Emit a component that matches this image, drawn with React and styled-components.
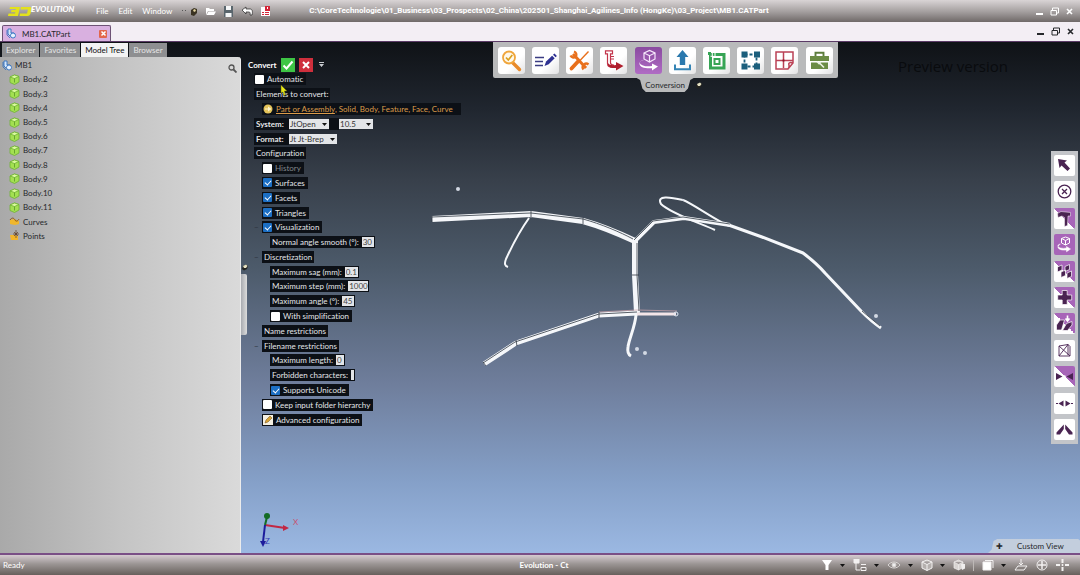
import React, { useState } from "react";
import styled, { createGlobalStyle } from "styled-components";

const bodies = [2, 3, 4, 5, 6, 7, 8, 9, 10, 11];

const tools = [
  { id: "check", label: "Check" },
  { id: "edit", label: "Edit" },
  { id: "repair", label: "Repair" },
  { id: "analyse", label: "Analyse" },
  { id: "convert", label: "Conversion" },
  { id: "export", label: "Export" },
  { id: "offset", label: "Offset" },
  { id: "bounds", label: "Bounds" },
  { id: "drawing", label: "Drawing" },
  { id: "toolbox", label: "Toolbox" },
];

const sideTools = [
  { id: "arrow", label: "Select" },
  { id: "cancel", label: "Cancel" },
  { id: "caliper", label: "Measure", tone: "half" },
  { id: "hand", label: "Convert", tone: "full" },
  { id: "blocks", label: "Split", tone: "half" },
  { id: "plus", label: "Add", tone: "half" },
  { id: "project", label: "Project", tone: "half" },
  { id: "face", label: "Face" },
  { id: "mirror", label: "Mirror", tone: "half" },
  { id: "stretch", label: "Stretch" },
  { id: "angle", label: "Angle" },
];

function ToolIcon({ id }) {
  return (
    <svg width="27" height="27" viewBox="0 0 27 27" fill="none">
      {id === "check" && (
        <>
          <path d="M14.500 15.500l7 7" stroke="#e88a2a" strokeWidth="3.400" strokeLinecap="round" />
          <circle cx="11" cy="10.500" r="6" stroke="#f0a63c" strokeWidth="1.800" fill="#fff8ea" />
          <path d="M8 10.500l2.300 2.500 4-5" stroke="#d9a020" strokeWidth="1.700" />
        </>
      )}
      {id === "edit" && (
        <>
          <path d="M3 10.500h9M3 14.500h8M3 18.500h8" stroke="#3b3d83" strokeWidth="1.600" />
          <path d="M12.500 19l1.600-4.500 6-5.800 2.600 2.600-6 6z" fill="#2e3192" />
          <path d="M21 7.800l1.500-1.300 2.400 2.500-1.300 1.300z" fill="#2e3192" />
        </>
      )}
      {id === "repair" && (
        <>
          <path d="M7 7l13 14" stroke="#e8701c" strokeWidth="3" />
          <path d="M4.500 8.500a3.600 3.600 0 0 0 5 1.500M8 4.500a3.600 3.600 0 0 1 2 5" stroke="#e8701c" strokeWidth="2.300" />
          <path d="M17.500 18a3.500 3.500 0 0 0 0 4.500M18 17.500a3.500 3.500 0 0 1 4.500 0" stroke="#e8701c" strokeWidth="2.300" />
          <path d="M22.500 4.500l-9 9.500" stroke="#e8701c" strokeWidth="1.400" />
          <path d="M12 14.500l-6.500 7" stroke="#e8701c" strokeWidth="3.800" strokeLinecap="round" />
        </>
      )}
      {id === "analyse" && (
        <>
          <path d="M5.500 3.800h7v3h-2v9c0 1.500 1 2.200 3 2.200v2.500c-4 0-6-1.200-6-4V6.800h-2z" stroke="#c2344a" strokeWidth="1.200" fill="#fff" />
          <path d="M11 9.500h3M11 12h3" stroke="#c2344a" />
          <path d="M8 16c1 2 4 2.500 8 2v-3l7.500 4-7.500 4.500v-2.500c-5 .5-9-1-8-5z" fill="#b01f2e" />
        </>
      )}
      {id === "convert" && (
        <>
          <path d="M9 6l5.500-2.500L20 6v6l-5.500 3L9 12zM9 6l5.500 2.700L20 6M14.500 8.700V15" stroke="#f6e8fb" strokeWidth="1.200" />
          <path d="M9 13c-5 1-5.500 4-1 5.500 3 1 5 1 9 .5v-2.500l6 3-6 4v-2.300c-6 .6-13-.9-12.500-5C4.700 14.500 6.500 13 9 13z" fill="#fff" />
        </>
      )}
      {id === "export" && (
        <>
          <path d="M13.500 3l6 7h-3.300v8h-5.400v-8H7.500z" fill="#2a78ad" />
          <path d="M6 17.500v4.800h15v-4.800" stroke="#3484b5" strokeWidth="2" />
        </>
      )}
      {id === "offset" && (
        <>
          <path d="M7.500 7.500h13.500v13.500H7.500z" stroke="#36a455" strokeWidth="3" />
          <path d="M11.500 12h5v5h-5z" stroke="#36a455" strokeWidth="2" />
          <path d="M5 5h3v3H5z" fill="#36a455" />
          <path d="M7.500 9.300h3M9.300 6v4M12 6v3" stroke="#fff" />
        </>
      )}
      {id === "bounds" && (
        <>
          <path d="M7.500 7.500h12v12h-12z" stroke="#1b5e7c" strokeWidth="1.800" strokeDasharray="3 2" />
          <path d="M4.500 4.500h6v6h-6zM17 4.500h6v6h-6zM4.500 16.500h6v6h-6zM17 16.500h6v6h-6z" fill="#1b5e7c" />
        </>
      )}
      {id === "drawing" && (
        <>
          <path d="M5 5h17v11l-5 6H5zM22 16c-3-1-5 0-4 2 .4 1.500-.2 3-1 4M12.500 5v16M5 13.500h17" stroke="#bb4256" strokeWidth="1.500" />
          <path d="M11.500 13.500h2M12.500 12.500v2" stroke="#8b1528" strokeWidth="1.500" />
        </>
      )}
      {id === "toolbox" && (
        <>
          <path d="M9.500 9V5.700h8V9" stroke="#5d7d3c" strokeWidth="1.900" />
          <path d="M4 9h19v5H4zM5 15.500h17V22H5z" fill="#6b8c45" />
          <path d="M11 14.500l2 2 1.500-2M14 16.500l4 4" stroke="#eef3e8" strokeWidth="1.600" />
        </>
      )}
    </svg>
  );
}

function SideIcon({ id }) {
  return (
    <svg width="21" height="21" viewBox="0 0 21 21" fill="none" stroke="#4a2452">
      {id === "arrow" && <path d="M4 4l9 1.500-2.500 2 5.500 6-2.500 2.500-6-5.500-2 2.500z" fill="#4a2452" stroke="none" />}
      {id === "cancel" && (
        <>
          <circle cx="10.500" cy="10.500" r="6.300" strokeWidth="1.300" />
          <path d="M8 8l5 5M13 8l-5 5" strokeWidth="1.300" />
        </>
      )}
      {id === "caliper" && <path d="M3.500 5.500L7 3.500l9.500 1v3.500h-2.500l-.5 9.500-3 1V9.500L8 8l-4 1.500z" fill="#4a2452" stroke="#fff" strokeWidth="0.500" />}
      {id === "hand" && (
        <g stroke="#fff">
          <path d="M7.500 4.500l4-1.500 4 1.500v4.500l-4 2-4-2zM7.500 4.500l4 2 4-2M11.500 6.500V11" />
          <path d="M6.500 10c-3.500.5-3.500 3 0 4 2 .5 4 .5 6 0v-1.500l4 2.500-4 2.800V16c-4 .5-9-.5-8.500-3.500" fill="#fff" strokeWidth="0.500" />
        </g>
      )}
      {id === "blocks" && (
        <g fill="#4a2452" stroke="#fff" strokeWidth="0.700">
          <path d="M3.500 6l4.500-2v5l-4.500 2zM11 5.500l4.500-2v5l-4.500 2zM7 11l4.500-2v5.500L7 16.500zM13 12l4.500-2v5.500L13 17.500z" />
        </g>
      )}
      {id === "plus" && <path d="M8.200 3.500h5v4.500h4.500v5h-4.500v4.500h-5V13H3.700V8h4.500z" fill="#4a2452" stroke="#fff" strokeWidth="0.700" />}
      {id === "project" && (
        <>
          <path d="M13.500 2.500v5M11.500 5.500l2 2.500 2-2.500" stroke="#fff" strokeWidth="1.600" />
          <path d="M2.500 12l3.500-5h4.500l-3 10H2.500zM8.500 17.500l4-7 5.500-2v3.500l-4.500 5.500z" fill="#4a2452" stroke="#fff" strokeWidth="0.700" />
        </>
      )}
      {id === "face" && <path d="M5 6l9-1.500 2 2V16H5zM5 6l11 10M14 4.500L5 16M14 4.500V15" strokeWidth="0.900" />}
      {id === "mirror" && (
        <g fill="#4a2452" stroke="none">
          <path d="M2 7l6.500 3.500L2 14zM19 7l-6.500 3.500L19 14z" />
          <circle cx="10.500" cy="10.500" r="1.200" fill="#fff" />
        </g>
      )}
      {id === "stretch" && (
        <g fill="#4a2452" stroke="none">
          <path d="M9.500 7.500v6l-5-3zM11.500 7.500v6l5-3z" />
          <path d="M2 10h2v1H2zM17 10h2v1h-2z" />
        </g>
      )}
      {id === "angle" && <path d="M9.800 5.500v4.500L6 15.500H2.500v-2zM11.200 5.500v4.500l3.800 5.500h3.500v-2z" fill="#4a2452" stroke="none" />}
    </svg>
  );
}

function PartIcon() {
  return (
    <svg width="11" height="11" viewBox="0 0 11 11" fill="none" stroke="#2f6fc0" strokeWidth="0.900">
      <path d="M2 1h3v4h3v3H4L2 6z" fill="#d4e6fa" />
      <circle cx="7" cy="7.500" r="2.500" fill="#e8f3ff" />
      <path d="M1 2v5l3 3" strokeWidth="0.800" />
    </svg>
  );
}

function BodyIcon() {
  return (
    <svg width="11" height="11" viewBox="0 0 11 11" stroke="#6fb234" strokeWidth="0.800">
      <path d="M1 3l4.500-2L10 2.500v5.500L5.500 10.500 1 8.500z" fill="#a3e052" />
      <path d="M1 3l4.500 1.500L10 2.500 5.500 1z" fill="#dcfa9f" />
      <path d="M5.500 4.500v4" fill="none" stroke="#5b9428" />
    </svg>
  );
}

function Triangle({ color = "#111" }) {
  return (
    <svg width="5" height="5" viewBox="0 0 5 5">
      <path d="M0 1h5L2.500 4z" fill={color} />
    </svg>
  );
}

function PinGlyph() {
  return (
    <svg width="6" height="7" viewBox="0 0 6 7">
      <path d="M1 2l3-1.500L6 2 5 5 2 6.500 0 5z" fill="#23231f" />
      <path d="M1 2l3-1.500L5.500 2 4 4 2 4z" fill="#e6e2c4" />
    </svg>
  );
}

function WindowButtons() {
  return (
    <WinButtons>
      <IconButton aria-label="Minimize">
        <svg width="9" height="9" viewBox="0 0 9 9"><path d="M1 6h7v2H1z" fill="currentColor" /></svg>
      </IconButton>
      <IconButton aria-label="Restore">
        <svg width="9" height="9" viewBox="0 0 9 9" fill="none" stroke="currentColor"><path d="M2.500 3V1h6v5H7M1 3.500h5.500V8H1z" /></svg>
      </IconButton>
      <IconButton aria-label="Close">
        <svg width="9" height="9" viewBox="0 0 9 9" stroke="currentColor" strokeWidth="1.600"><path d="M2 2l5 5M7 2L2 7" /></svg>
      </IconButton>
    </WinButtons>
  );
}

function Option({ label, checked, indent, disabled, glyph }) {
  const [on, setOn] = useState(!!checked);
  return (
    <Row $indent={indent}>
      {glyph && <Twist>−</Twist>}
      <CheckChip $disabled={disabled}>
        <CheckBox type="checkbox" checked={on} disabled={disabled} onChange={(e) => setOn(e.target.checked)} />
        {label}
      </CheckChip>
    </Row>
  );
}

function Field({ label, value, width }) {
  const [text, setText] = useState(value);
  return (
    <Row $indent={22}>
      <FieldChip>
        {label}
        <Value $width={width} value={text} onChange={(e) => setText(e.target.value)} />
      </FieldChip>
    </Row>
  );
}

function Dropdown({ label, options, width }) {
  return (
    <SelectWrap $width={width}>
      <Select aria-label={label}>
        {options.map((o) => (
          <option key={o}>{o}</option>
        ))}
      </Select>
      <Triangle />
    </SelectWrap>
  );
}

function Scene() {
  return (
    <SceneSvg viewBox="241 42 839 511" fill="none">
      <g strokeLinejoin="round">
        <g stroke="#f5f7fa">
          <path d="M432 219l99-5 52 7c18 5 37 13 52 20" strokeWidth="6" />
          <path d="M635 241v34l2 38" strokeWidth="6" />
          <path d="M635 241l19-19 30-4 46 7" strokeWidth="4" />
          <path d="M715 230c-18-8-45-17-54-26-5-9 9-7 22-4 8 3 25 15 40 23" strokeWidth="2" />
          <path d="M723 223l39 14 41 16c8 6 16 13 22 20l36 38c7 7 14 13 20 17" strokeWidth="3" />
          <path d="M484 364l32-21 83-28 38-2" strokeWidth="5" />
          <path d="M637 314h39" strokeWidth="3" stroke="#f3e5e8" />
          <path d="M599 312l38-2 40 1" stroke="#d3a8ae" strokeWidth="0.700" />
          <path d="M529 218c-10 14-17 28-23 41-2 5-1 7 2 8" strokeWidth="2" />
          <path d="M636 315c-1 12-7 24-8 32-1 6 1 8 3 9" strokeWidth="3" />
        </g>
        <g stroke="#303843" strokeWidth="0.800">
          <path d="M432 217l99-4 52 6c18 5 37 13 50 20" />
          <path d="M637 243v32l2 36" />
          <path d="M634 240l19-19 30-4 47 7" />
          <path d="M483 363l32-21 84-28 38-2" />
          <path d="M862 311l18 15" />
        </g>
        <path d="M531 211v6M583 218v6M632 275h7M599 312v6M516 340l1 6M432 216v6M483 362l3 4" stroke="#303843" strokeWidth="0.800" />
        <circle cx="676" cy="314" r="2" stroke="#dfe7f2" />
      </g>
      <g fill="#d3d9e3">
        <circle cx="458" cy="189" r="2" />
        <circle cx="637" cy="349" r="2" />
        <circle cx="645" cy="353" r="2" />
        <circle cx="876" cy="316" r="2" />
        <circle cx="683" cy="200" r="1" />
      </g>
      <path d="M265 525l20 3" stroke="#c22743" strokeWidth="2" />
      <path d="M283 525l6 3-6 3z" fill="#c22743" />
      <path d="M265 525l2-8" stroke="#136b25" strokeWidth="2" />
      <circle cx="267" cy="516" r="3" fill="#136b25" />
      <path d="M265 525l-2 17" stroke="#1c1c9c" strokeWidth="2" />
      <path d="M260 541h6l-3 6z" fill="#1c1c9c" />
      <AxisText x="293" y="525" fill="#c8506e">X</AxisText>
      <AxisText x="265" y="544" fill="#3340b5">Z</AxisText>
    </SceneSvg>
  );
}

export default function App() {
  const [tool, setTool] = useState("convert");
  return (
    <>
      <Global />
      <Window>
        <TitleBar>
          <Logo>
            <svg width="72" height="12" viewBox="0 0 72 12" aria-hidden="true">
              <path d="M2 2h10l-2 9H0l.5-2.500h6.500l.3-1.200H3L3.500 5h4.200l.3-1H1.500zM13 2h9c2 0 2 1 1.500 3l-1 3.500c-.5 1.500-1 2.500-3 2.500h-8l.5-2.500h7l1-4h-7.500z" fill="#e3e11c" />
            </svg>
            <LogoText>EVOLUTION</LogoText>
          </Logo>
          <Menus>
            <Menu>File</Menu>
            <Menu>Edit</Menu>
            <Menu>Window</Menu>
          </Menus>
          <Quick>
            <IconButton aria-label="Pin">
              <svg width="16" height="11" viewBox="0 0 16 11"><path d="M0 4h1v1H0zM3 4h1v1H3z" fill="#555" /><path d="M9 4l3-2 3 1v4l-3 3-3-1z" fill="#3a3322" /><path d="M11 4l2-1 1 2-2 1z" fill="#e8d9a5" /></svg>
            </IconButton>
            <IconButton aria-label="Open">
              <svg width="11" height="11" viewBox="0 0 11 11"><path d="M1 2h3l1 1h4v2H3L1 9zM3.500 5.500H11L9 9H1.500z" fill="#fff" /></svg>
            </IconButton>
            <IconButton aria-label="Save">
              <svg width="11" height="11" viewBox="0 0 11 11"><path d="M1 0h9v11H1z" fill="#59656c" /><path d="M3 0h5v4H3zM2.500 7h6v4h-6z" fill="#f4f6f7" /></svg>
            </IconButton>
            <IconButton aria-label="Undo">
              <svg width="12" height="11" viewBox="0 0 12 11"><path d="M1 4l4-3v2h4c2 0 3 2 2 6H9c.5-2 0-3-1-3H5v2z" fill="#fff" stroke="#222" strokeWidth="0.700" /></svg>
            </IconButton>
            <IconButton aria-label="Report">
              <svg width="11" height="11" viewBox="0 0 11 11"><path d="M1 1h9v9H1z" fill="#fff" /><path d="M5 0h5v5H5zM2 6h2v1H2zM5 6h4v1H5zM2 8h2v1H2zM5 8h4v1H5z" fill="#d32537" /><path d="M7 1h1v2H7z" fill="#fff" /></svg>
            </IconButton>
          </Quick>
          <FilePath>C:\CoreTechnologie\01_Business\03_Prospects\02_China\202501_Shanghai_Agilines_Info (HongKe)\03_Project\MB1.CATPart</FilePath>
          <WindowButtons />
        </TitleBar>

        <FileBar>
          <FileTab>
            <PartIcon />
            <span>MB1.CATPart</span>
            <CloseTab aria-label="Close file">
              <svg width="7" height="7" viewBox="0 0 7 7" stroke="#fff" strokeWidth="1.500"><path d="M1.500 1.500l4 4M5.500 1.500l-4 4" /></svg>
            </CloseTab>
          </FileTab>
          <WindowButtons />
        </FileBar>

        <Workspace>
          <Sidebar>
            <Tabs>
              <Tab>Explorer</Tab>
              <Tab>Favorites</Tab>
              <Tab $active>Model Tree</Tab>
              <Tab>Browser</Tab>
            </Tabs>
            <Tree>
              <TreeRows>
                <TreeRow $root>
                  <PartIcon />
                  MB1
                </TreeRow>
                {bodies.map((n) => (
                  <TreeRow key={n}>
                    <BodyIcon />
                    Body.{n}
                  </TreeRow>
                ))}
                <TreeRow>
                  <svg width="11" height="11" viewBox="0 0 11 11"><path d="M1 4l4-1 5 2v3L6 9 1 8z" fill="#f0b72d" /><path d="M1 4c2-3 4-2 5 0s3 1 4-1" fill="none" stroke="#8b5519" /></svg>
                  Curves
                </TreeRow>
                <TreeRow>
                  <svg width="11" height="11" viewBox="0 0 11 11"><path d="M1 5h4l4 1v4H2z" fill="#f3b52a" /><path d="M7 0v8M4 4h6M5 2l4 4M9 2L5 6" stroke="#5d3c22" strokeWidth="0.700" /></svg>
                  Points
                </TreeRow>
              </TreeRows>
              <IconButton aria-label="Search tree">
                <svg width="9" height="9" viewBox="0 0 9 9" fill="none" stroke="#555"><circle cx="3.500" cy="3.500" r="2.500" strokeWidth="1.300" /><path d="M5.500 5.500L8.500 8.500" strokeWidth="1.800" /></svg>
              </IconButton>
            </Tree>
          </Sidebar>

          <Viewport>
            <Scene />
            <Splitter />
            <PanelPin><PinGlyph /></PanelPin>
            <Panel>
              <Heading>
                Convert
                <Apply aria-label="Apply">
                  <svg width="14" height="14" viewBox="0 0 14 14" fill="none" stroke="#fff" strokeWidth="2"><path d="M2.500 7.500l3 3 6-7" /></svg>
                </Apply>
                <Apply $danger aria-label="Cancel">
                  <svg width="14" height="14" viewBox="0 0 14 14" fill="none" stroke="#fff" strokeWidth="2"><path d="M4 4l6 6M10 4l-6 6" /></svg>
                </Apply>
                <svg width="7" height="7" viewBox="0 0 7 7"><path d="M2 1h5v1H2zM2 3h5L4.500 6z" fill="#c9ccd0" /></svg>
              </Heading>
              <Rows>
                <Option label="Automatic" indent={6} />
                <Row $indent={6}><Chip>Elements to convert:</Chip></Row>
                <Row $indent={14}>
                  <Picker>
                    <svg width="10" height="10" viewBox="0 0 10 10"><circle cx="5" cy="5" r="4.500" fill="#e4c35a" /><path d="M2 4.500h3V2.500L8.500 5 5 7.500v-2H2z" fill="#fff6cf" /></svg>
                    <span><a href="#part">Part or Assembly</a>, Solid, Body, Feature, Face, Curve</span>
                  </Picker>
                </Row>
                <Row $indent={6}>
                  <StrongChip>System:</StrongChip>
                  <Dropdown label="System" options={["JtOpen"]} width={40} />
                  <Gap />
                  <Dropdown label="Version" options={["10.5"]} width={34} />
                </Row>
                <Row $indent={6}>
                  <StrongChip>Format:</StrongChip>
                  <Dropdown label="Format" options={["Jt Jt-Brep"]} width={48} />
                </Row>
                <Row $indent={6}><Chip>Configuration</Chip></Row>
                <Option label="History" indent={14} disabled />
                <Option label="Surfaces" indent={14} checked />
                <Option label="Facets" indent={14} checked />
                <Option label="Triangles" indent={14} checked />
                <Option label="Visualization" indent={14} checked glyph />
                <Field label="Normal angle smooth (°):" value="30" width={12} />
                <Row $indent={14}><Twist>−</Twist><Chip>Discretization</Chip></Row>
                <Field label="Maximum sag (mm):" value="0.1" width={13} />
                <Field label="Maximum step (mm):" value="1000" width={20} />
                <Field label="Maximum angle (°):" value="45" width={12} />
                <Option label="With simplification" indent={22} />
                <Row $indent={14}><Chip>Name restrictions</Chip></Row>
                <Row $indent={14}><Twist>−</Twist><Chip>Filename restrictions</Chip></Row>
                <Field label="Maximum length:" value="0" width={8} />
                <Field label="Forbidden characters:" value="" width={3} />
                <Option label="Supports Unicode" indent={22} checked />
                <Option label="Keep input folder hierarchy" indent={14} />
                <Row $indent={14}>
                  <AdvancedButton>
                    <svg width="10" height="10" viewBox="0 0 10 10"><path d="M0 0h10v10H0z" fill="#f4efe2" /><path d="M2 8l1-3 4-4 2 2-4 4z" fill="#d9a436" stroke="#6b4a18" strokeWidth="0.500" /></svg>
                    Advanced configuration
                  </AdvancedButton>
                </Row>
              </Rows>
            </Panel>
            <Cursor width="8" height="11" viewBox="0 0 8 11"><path d="M1 0l6 6H4.500L5.500 10 4 10.500 2.800 7 1 8z" fill="#e6e61a" stroke="#555a12" strokeWidth="0.500" /></Cursor>

            <Ribbon>
              <RibbonButtons>
                {tools.map((t) => (
                  <RibbonButton key={t.id} aria-label={t.label} $active={t.id === tool} onClick={() => setTool(t.id)}>
                    <ToolIcon id={t.id} />
                  </RibbonButton>
                ))}
              </RibbonButtons>
              <RibbonFoot>
                <RibbonLabel>{tools.find((t) => t.id === tool).label}</RibbonLabel>
                <PinGlyph />
              </RibbonFoot>
            </Ribbon>
            <Watermark>Preview version</Watermark>

            <SideBar>
              {sideTools.map((t) => (
                <SideButton key={t.id} aria-label={t.label} $tone={t.tone}>
                  <SideIcon id={t.id} />
                </SideButton>
              ))}
            </SideBar>

            <ViewTab>
              <span>✚</span>
              Custom View
            </ViewTab>
          </Viewport>
        </Workspace>

        <StatusBar>
          <span>Ready</span>
          <strong>Evolution - Ct</strong>
          <StatusTools>
            <IconButton aria-label="Filter">
              <svg width="12" height="12" viewBox="0 0 12 12"><path d="M1 1h10L7.500 6v5h-3V6z" fill="#fff" /></svg>
              <Triangle />
            </IconButton>
            <IconButton aria-label="Structure">
              <svg width="14" height="12" viewBox="0 0 14 12" fill="none" stroke="#f3f1f1"><path d="M1 0h5v4H1z" fill="#f3f1f1" /><path d="M3 4v7h4M8 5.500h5M8 8.500h5v3H8z" /></svg>
              <Triangle />
            </IconButton>
            <IconButton aria-label="Visibility">
              <svg width="14" height="12" viewBox="0 0 14 12" fill="none" stroke="#d8d4d3"><path d="M1 6c3-4 9-4 12 0-3 4-9 4-12 0z" /><circle cx="7" cy="6" r="2" fill="#eee" /></svg>
              <Triangle />
            </IconButton>
            <IconButton aria-label="Orientation">
              <svg width="12" height="12" viewBox="0 0 12 12" fill="#b5b0ae" stroke="#f3f1f1"><path d="M1 3l5-2 5 2v6l-5 2.500L1 9zM1 3l5 2.500L11 3M6 5.500v6" /></svg>
              <Triangle />
            </IconButton>
            <IconButton aria-label="Shading">
              <svg width="12" height="12" viewBox="0 0 12 12" fill="#d8d4d2" stroke="#efeded"><path d="M1 3l4.500-2L10 3v5.500L5.500 11 1 9zM1 3l4.500 2.500L10 3M5.500 5.500V11" strokeWidth="0.700" /><path d="M8 5h4v4.500L9 11z" fill="#efeded" stroke="none" /></svg>
            </IconButton>
            <Divider />
            <IconButton aria-label="Background">
              <svg width="12" height="12" viewBox="0 0 12 12" fill="none" stroke="#f3f1f1"><path d="M1 3h8v8H1z" fill="#fff" /><path d="M3 1.500h8V9" /></svg>
              <Triangle />
            </IconButton>
            <IconButton aria-label="Plane">
              <svg width="14" height="12" viewBox="0 0 14 12" fill="none" stroke="#f3f1f1"><path d="M4 7h9l-3 4H1zM7 0v6M5 4l2 2 2-2" /></svg>
            </IconButton>
            <IconButton aria-label="Center">
              <svg width="12" height="12" viewBox="0 0 12 12" fill="none" stroke="#f3f1f1"><circle cx="6" cy="6" r="5" /><path d="M6 2v8M2 6h8" strokeWidth="1.500" /></svg>
            </IconButton>
            <IconButton aria-label="Fit">
              <svg width="13" height="12" viewBox="0 0 13 12" fill="none" stroke="#f3f1f1" strokeWidth="2"><path d="M6.500 0v4M6.500 8v4M0 6h4M9 6h4" /><path d="M6 5.500h1v1H6z" strokeWidth="1" /></svg>
            </IconButton>
          </StatusTools>
        </StatusBar>
      </Window>
    </>
  );
}

const Global = createGlobalStyle`
  * { box-sizing: border-box; }
  body {
    margin: 0;
    font-family: Lato, "Open Sans", sans-serif;
    font-size: 8px;
    font-variant-ligatures: none;
    line-height: 12px;
    color: #26282b;
  }
  button, input, select { font: inherit; color: inherit; border: 0; margin: 0; padding: 0; }
  svg { display: block; flex-shrink: 0; }
`;

const Window = styled.div`
  display: grid;
  grid-template-rows: 22px 20px 1fr 22px;
  min-height: 100vh;
`;

const IconButton = styled.button`
  display: flex;
  align-items: center;
  gap: 7px;
  background: none;
`;

const TitleBar = styled.header`
  display: flex;
  align-items: center;
  padding: 0 6px 0 8px;
  background: linear-gradient(#d9d4d5, #a29d9d 55%, #6f6968);
  color: #fff;
`;

const Logo = styled.div`
  position: relative;
  width: 72px;
  margin-right: 16px;
`;

const LogoText = styled.span`
  position: absolute;
  left: 23px;
  top: -2px;
  font-size: 8px;
  font-weight: 900;
  font-style: italic;
  color: #fff;
`;

const Menus = styled.nav`
  display: flex;
  gap: 10px;
`;

const Menu = styled.button`
  background: none;
`;

const Quick = styled.div`
  display: flex;
  gap: 7px;
  margin-left: 10px;
`;

const FilePath = styled.div`
  flex: 1;
  padding-left: 38px;
  font-family: Roboto, sans-serif;
  font-weight: 700;
  white-space: nowrap;
`;

const WinButtons = styled.div`
  display: flex;
  gap: 6px;
`;

const FileBar = styled.div`
  display: flex;
  align-items: center;
  justify-content: space-between;
  padding: 0 5px 0 2px;
  background: #f3eef4;
  border-bottom: 1px solid #5b3b66;
`;

const FileTab = styled.div`
  align-self: flex-end;
  display: flex;
  align-items: center;
  gap: 5px;
  width: 109px;
  height: 16px;
  padding: 0 3px;
  background: #d9b0e0;
  border: 1px solid #6d5275;
  border-bottom: 0;
  border-radius: 2px 2px 0 0;
`;

const CloseTab = styled.button`
  display: grid;
  place-items: center;
  width: 8px;
  height: 8px;
  margin-left: auto;
  background: #e2664c;
  border-radius: 1px;
`;

const Workspace = styled.main`
  display: grid;
  grid-template-columns: 241px 1fr;
  background: linear-gradient(#0f1216, #20262f 13%, #38404b 27%, #4c5a6a 44%, #6f7e9c 67%, #85a0c8 86%, #9bb8e2);
`;

const Sidebar = styled.aside`
  display: flex;
  flex-direction: column;
`;

const Tabs = styled.div`
  display: flex;
  gap: 1px;
  height: 15px;
  padding: 1px 0 0 2px;
`;

const Tab = styled.button`
  padding: 0 4px;
  background: ${(p) => (p.$active ? "#f3f3f3" : "#8e8f91")};
  color: ${(p) => (p.$active ? "#111" : "#e6e6e6")};
`;

const Tree = styled.div`
  flex: 1;
  display: flex;
  justify-content: space-between;
  align-items: flex-start;
  background: linear-gradient(90deg, #a9a9a9, #c4c4c4 50%, #dadada);
  border-right: 1px solid #ececec;
  border-radius: 0 3px 0 0;
  padding: 1px 3px 0 2px;

  > button {
    padding-top: 6px;
  }
`;

const TreeRows = styled.div`
  display: grid;
  grid-template-rows: repeat(13, 1fr);
  height: 185px;
`;

const TreeRow = styled.div`
  display: flex;
  align-items: center;
  gap: ${(p) => (p.$root ? 2 : 3)}px;
  padding-left: ${(p) => (p.$root ? 0 : 7)}px;
`;

const Viewport = styled.section`
  position: relative;
  overflow: hidden;
`;

const SceneSvg = styled.svg`
  position: absolute;
  inset: 0;
  width: 100%;
  height: 100%;
`;

const AxisText = styled.text`
  font-size: 8px;
`;

const Splitter = styled.div`
  position: absolute;
  left: 0;
  top: 232px;
  width: 6px;
  height: 61px;
  background: linear-gradient(90deg, #a8abb0, #dcdcdc);
  border-radius: 0 2px 2px 0;
`;

const PanelPin = styled.div`
  position: absolute;
  left: 1px;
  top: 222px;
`;

const Cursor = styled.svg`
  position: absolute;
  left: 39px;
  top: 43px;
`;

const Panel = styled.form`
  position: relative;
  width: 260px;
  padding: 15px 0 0 7px;
  color: #e4e6e9;
`;

const Heading = styled.div`
  display: flex;
  align-items: center;
  gap: 4px;
  height: 15px;
  font-weight: 700;
  color: #fff;
`;

const Apply = styled.button.attrs({ type: "button" })`
  width: 14px;
  height: 14px;
  background: ${(p) => (p.$danger ? "#cf2f3c" : "#3ec545")};
`;

const Rows = styled.div`
  display: grid;
  grid-template-rows: repeat(24, 1fr);
  height: 355px;
`;

const Row = styled.div`
  position: relative;
  display: flex;
  align-items: center;
  padding-left: ${(p) => p.$indent}px;
`;

const Twist = styled.span`
  position: absolute;
  left: 6px;
  color: #2c333d;
`;

const Chip = styled.span`
  height: 12px;
  padding: 0 2px;
  background: #0c1016;
  white-space: nowrap;
`;

const StrongChip = styled(Chip)`
  width: 35px;
  font-weight: 700;
`;

const Gap = styled.span`
  width: 10px;
  height: 12px;
  background: #0c1016;
`;

const CheckChip = styled.label`
  display: flex;
  align-items: center;
  gap: 3px;
  height: 12px;
  padding: 0 3px 0 1px;
  background: #0c1016;
  color: ${(p) => (p.$disabled ? "#83878c" : "inherit")};
  white-space: nowrap;
`;

const CheckBox = styled.input`
  appearance: none;
  position: relative;
  width: 9px;
  height: 9px;
  background: #fff;
  border-radius: 1px;

  &:checked { background: #1c6fc4; }

  &:checked::after {
    content: "";
    position: absolute;
    left: 3px;
    top: 1px;
    width: 3px;
    height: 5px;
    border: solid #fff;
    border-width: 0 1px 1px 0;
    transform: rotate(42deg);
  }
`;

const FieldChip = styled(CheckChip)`
  padding: 0 1px 0 2px;
`;

const Value = styled.input`
  width: ${(p) => p.$width}px;
  height: 10px;
  padding-left: 1px;
  background: #e3e5e8;
  color: #444;
`;

const Picker = styled.div`
  display: flex;
  align-items: center;
  gap: 3px;
  height: 12px;
  padding: 0 8px 0 1px;
  background: #0c1016;
  color: #dc9c4a;
  white-space: nowrap;

  a { color: inherit; }
`;

const SelectWrap = styled.span`
  position: relative;
  display: flex;
  width: ${(p) => p.$width}px;
  height: 10px;

  svg {
    position: absolute;
    right: 2px;
    top: 3px;
    pointer-events: none;
  }
`;

const Select = styled.select`
  appearance: none;
  width: 100%;
  height: 10px;
  padding: 0 1px;
  line-height: 10px;
  background: #e3e5e8;
  color: #333;
`;

const AdvancedButton = styled.button.attrs({ type: "button" })`
  display: flex;
  align-items: center;
  gap: 3px;
  height: 12px;
  padding: 0 3px 0 1px;
  background: #0c1016;
`;

const Ribbon = styled.div`
  position: absolute;
  left: 30%;
  top: 0;
  width: 345px;
`;

const RibbonButtons = styled.div`
  display: flex;
  justify-content: space-between;
  align-items: center;
  height: 36px;
  padding: 0 5px;
  background: #b9babb;
  border-radius: 0 0 2px 2px;
`;

const RibbonButton = styled.button`
  width: 27px;
  height: 27px;
  border-radius: 3px;
  background: ${(p) => (p.$active ? "linear-gradient(#8a4aa0, #b06cc4)" : "linear-gradient(135deg, #fff 60%, #e2e2e3)")};
`;

const RibbonFoot = styled.div`
  display: flex;
  align-items: center;
  gap: 2px;
  padding-left: 144px;
`;

const RibbonLabel = styled.div`
  width: 57px;
  height: 14px;
  line-height: 15px;
  background: #b9babb;
  clip-path: polygon(0 0, 100% 0, 94% 15%, 90% 75%, 84% 100%, 16% 100%, 10% 75%, 6% 15%);
  text-align: center;
`;

const Watermark = styled.div`
  position: absolute;
  right: 72px;
  top: 14px;
  font-family: "Open Sans", sans-serif;
  font-size: 15px;
  line-height: 20px;
  color: #090b0e;
`;

const SideBar = styled.div`
  position: absolute;
  right: 2px;
  top: 109px;
  display: flex;
  flex-direction: column;
  align-items: center;
  justify-content: space-between;
  width: 27px;
  height: 293px;
  padding: 4px 0;
  background: #c3c5c9;
`;

const SideButton = styled.button`
  width: 21px;
  height: 21px;
  border-radius: 2px;
  background: ${(p) =>
    p.$tone === "full"
      ? "#a765b8"
      : p.$tone === "half"
      ? "linear-gradient(45deg, #fff 50%, #a765b8 50%)"
      : "#fff"};
`;

const ViewTab = styled.button`
  position: absolute;
  right: 0;
  bottom: 0;
  display: flex;
  align-items: center;
  gap: 14px;
  width: 92px;
  height: 14px;
  padding-left: 8px;
  background: #c3cedd;
  clip-path: polygon(0 100%, 4% 75%, 6% 15%, 10% 0, 98% 0, 100% 10%, 100% 100%);
`;

const StatusBar = styled.footer`
  display: grid;
  grid-template-columns: 1fr auto 1fr;
  align-items: center;
  padding: 0 11px 0 3px;
  border-top: 2px solid #7a4f86;
  background: linear-gradient(#d5cbd0, #9b9594 45%, #67605c);
  color: #fff;

  strong { padding-left: 16px; }
`;

const StatusTools = styled.div`
  display: flex;
  justify-content: flex-end;
  align-items: center;
  gap: 8px;
`;

const Divider = styled.span`
  width: 1px;
  height: 11px;
  background: #bdb8b6;
`;
